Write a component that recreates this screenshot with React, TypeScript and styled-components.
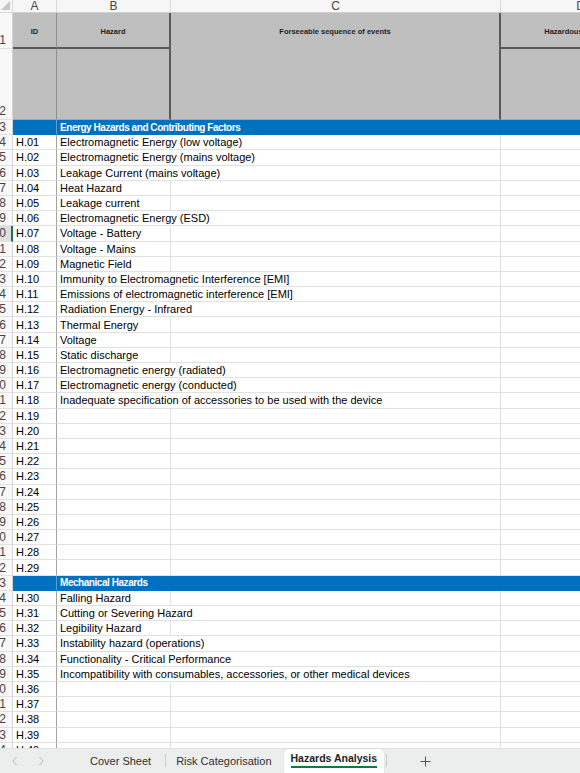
import React from "react";
import styled, { createGlobalStyle } from "styled-components";

const GlobalStyle = createGlobalStyle`
  html, body {
    margin: 0;
    padding: 0;
    background: #ffffff;
  }
  body {
    font-family: "Liberation Sans", Arial, sans-serif;
  }
  * {
    box-sizing: border-box;
  }
`;

const COLS = "27px 44px 114px 330px 160px";
const ROW_H = 15.2;
const ACTIVE_ROW = 10;

const energyHazards = [
  "Electromagnetic Energy (low voltage)",
  "Electromagnetic Energy (mains voltage)",
  "Leakage Current (mains voltage)",
  "Heat Hazard",
  "Leakage current",
  "Electromagnetic Energy (ESD)",
  "Voltage - Battery",
  "Voltage - Mains",
  "Magnetic Field",
  "Immunity to Electromagnetic Interference [EMI]",
  "Emissions of electromagnetic interference [EMI]",
  "Radiation Energy - Infrared",
  "Thermal Energy",
  "Voltage",
  "Static discharge",
  "Electromagnetic energy (radiated)",
  "Electromagnetic energy (conducted)",
  "Inadequate specification of accessories to be used with the device",
];

const mechanicalHazards = [
  "Falling Hazard",
  "Cutting or Severing Hazard",
  "Legibility Hazard",
  "Instability hazard (operations)",
  "Functionality - Critical Performance",
  "Incompatibility with consumables, accessories, or other medical devices",
];

type Line =
  | { kind: "section"; num: number; title: string }
  | { kind: "item"; num: number; id: string; text: string };

const buildLines = (): Line[] => {
  const lines: Line[] = [];
  let num = 3;
  let id = 1;
  const section = (title: string, items: string[], count: number) => {
    lines.push({ kind: "section", num: num++, title });
    for (let i = 0; i < count; i++) {
      lines.push({
        kind: "item",
        num: num++,
        id: `H.${String(id++).padStart(2, "0")}`,
        text: items[i] ?? "",
      });
    }
  };
  section("Energy Hazards and Contributing Factors", energyHazards, 29);
  section("Mechanical Hazards", mechanicalHazards, 12);
  return lines;
};

const lines = buildLines();

const Window = styled.div`
  width: 580px;
  height: 773px;
  overflow: hidden;
  display: flex;
  flex-direction: column;
  background: #ffffff;
`;

const SheetArea = styled.div`
  flex: 1;
  overflow: hidden;
`;

const Sheet = styled.div`
  margin-left: -14px;
  width: 675px;
`;

const ColumnBar = styled.div`
  display: grid;
  grid-template-columns: ${COLS};
  height: 13px;
  background: #f6f6f6;
`;

const Corner = styled.div`
  display: flex;
  justify-content: flex-end;
  align-items: flex-end;
  padding: 0 2px 2px 0;
  border-right: 1px solid #dadada;
  border-bottom: 1px solid #dadada;
`;

const ColumnLetter = styled.div`
  display: flex;
  align-items: center;
  justify-content: center;
  font-size: 12px;
  line-height: 1;
  color: #474747;
  border-right: 1px solid #dadada;
  border-bottom: 1px solid #d0d0d0;
`;

const HeaderGrid = styled.div`
  display: grid;
  grid-template-columns: ${COLS};
  grid-template-rows: 36px 71px;
`;

const RowNum = styled.div<{ $active?: boolean; $tall?: boolean }>`
  display: flex;
  align-items: ${(p) => (p.$tall ? "flex-end" : "center")};
  justify-content: flex-end;
  padding-right: ${(p) => (p.$active ? 5 : 6)}px;
  padding-bottom: ${(p) => (p.$tall ? 2 : 0)}px;
  font-size: 12px;
  line-height: 1;
  color: #444444;
  background: ${(p) => (p.$active ? "#dedede" : "#f8f8f8")};
  border-right: ${(p) => (p.$active ? "2px solid #1f7244" : "1px solid #d4d4d4")};
  border-bottom: 1px solid #e1e1e1;
`;

const HeadCell = styled.div<{ $thickRight?: boolean; $thickBottom?: boolean; $rows?: number }>`
  grid-row: span ${(p) => p.$rows ?? 1};
  background: #bfbfbf;
  padding-top: 14px;
  text-align: center;
  white-space: nowrap;
  overflow: hidden;
  font-size: 7.5px;
  font-weight: bold;
  color: #1e1e1e;
  border-right: ${(p) => (p.$thickRight ? "2px solid #5a5a5a" : "1px solid #8f8f8f")};
  border-bottom: ${(p) => (p.$thickBottom ? "2px solid #5a5a5a" : "1px solid #a6a6a6")};
`;

const DataRow = styled.div`
  display: grid;
  grid-template-columns: ${COLS};
  height: ${ROW_H}px;
`;

const Cell = styled.div<{ $span?: number; $strongRight?: boolean; $section?: boolean }>`
  grid-column: span ${(p) => p.$span ?? 1};
  display: flex;
  align-items: center;
  padding: 1px 0 0 3px;
  white-space: nowrap;
  overflow: hidden;
  font-size: ${(p) => (p.$section ? 10 : 11)}px;
  line-height: 1;
  color: ${(p) => (p.$section ? "#ffffff" : "#000000")};
  font-weight: ${(p) => (p.$section ? "bold" : "normal")};
  letter-spacing: ${(p) => (p.$section ? "-0.45px" : "0")};
  background: ${(p) => (p.$section ? "#0070c0" : "#ffffff")};
  border-right: 1px solid
    ${(p) => (p.$section ? "#5d9fd3" : p.$strongRight ? "#a3a3a3" : "#e1e1e1")};
  border-bottom: 1px solid ${(p) => (p.$section ? "#0070c0" : "#e1e1e1")};
`;

const TabBar = styled.div`
  height: 25px;
  flex-shrink: 0;
  display: flex;
  align-items: stretch;
  background: #eceeee;
  border-top: 1px solid #e2e2e2;
  font-size: 11px;
  color: #303030;
`;

const NavGroup = styled.div`
  width: 76px;
  display: flex;
  padding-left: 2px;
`;

const NavButton = styled.div`
  width: 26px;
  display: flex;
  align-items: center;
  justify-content: center;
`;

const SheetTab = styled.div<{ $active?: boolean; $pad: number }>`
  display: flex;
  align-items: center;
  padding: 0 ${(p) => p.$pad}px;
  margin: 0 ${(p) => (p.$active ? 2 : 0)}px;
  background: ${(p) => (p.$active ? "#ffffff" : "transparent")};
  border-radius: ${(p) => (p.$active ? "5px 5px 0 0" : "0")};
  box-shadow: ${(p) => (p.$active ? "0 0 2px rgba(0, 0, 0, 0.12)" : "none")};
  white-space: nowrap;
`;

const ActiveLabel = styled.span`
  font-size: 10.5px;
  font-weight: bold;
  color: #222222;
  line-height: 12px;
  padding-bottom: 2px;
  margin-top: -2px;
  border-bottom: 2px solid #137a3e;
`;

const Separator = styled.div`
  width: 1px;
  background: #c9cbcb;
  margin: 5px 0 6px;
`;

const AddButton = styled.div`
  width: 76px;
  display: flex;
  align-items: center;
  justify-content: center;
`;

const Chevron = ({ dir }: { dir: "left" | "right" }) => (
  <svg width="8" height="10" viewBox="0 0 8 10">
    <path
      d={dir === "left" ? "M5.5 1 L1.8 5 L5.5 9" : "M2.5 1 L6.2 5 L2.5 9"}
      fill="none"
      stroke="#b4b6b6"
      strokeWidth="1"
    />
  </svg>
);

const Plus = () => (
  <svg width="11" height="11" viewBox="0 0 11 11">
    <path d="M5.5 0.5 V10.5 M0.5 5.5 H10.5" stroke="#555555" strokeWidth="1" />
  </svg>
);

const SelectAll = () => (
  <svg width="9" height="9" viewBox="0 0 9 9">
    <polygon points="9,0 9,9 0,9" fill="#c6c6c6" />
  </svg>
);

const ItemRow = ({ line }: { line: Extract<Line, { kind: "item" }> }) => {
  const wide = line.text.length > 20;
  return (
    <DataRow>
      <RowNum $active={line.num === ACTIVE_ROW}>{line.num}</RowNum>
      <Cell $strongRight>{line.id}</Cell>
      {wide ? (
        <Cell $span={2}>{line.text}</Cell>
      ) : (
        <>
          <Cell>{line.text}</Cell>
          <Cell />
        </>
      )}
      <Cell />
    </DataRow>
  );
};

const SectionRow = ({ line }: { line: Extract<Line, { kind: "section" }> }) => (
  <DataRow>
    <RowNum>{line.num}</RowNum>
    <Cell $section />
    <Cell $section $span={3}>
      {line.title}
    </Cell>
  </DataRow>
);

export default function App() {
  return (
    <Window>
      <GlobalStyle />
      <SheetArea>
        <Sheet>
          <ColumnBar>
            <Corner>
              <SelectAll />
            </Corner>
            <ColumnLetter>A</ColumnLetter>
            <ColumnLetter>B</ColumnLetter>
            <ColumnLetter>C</ColumnLetter>
            <ColumnLetter>D</ColumnLetter>
          </ColumnBar>

          <HeaderGrid>
            <RowNum $tall>1</RowNum>
            <HeadCell $thickBottom>ID</HeadCell>
            <HeadCell $thickBottom $thickRight>
              Hazard
            </HeadCell>
            <HeadCell $rows={2} $thickRight>
              Forseeable sequence of events
            </HeadCell>
            <HeadCell $thickBottom>Hazardous Situation</HeadCell>
            <RowNum $tall>2</RowNum>
            <HeadCell />
            <HeadCell $thickRight />
            <HeadCell />
          </HeaderGrid>

          {lines.map((line) =>
            line.kind === "section" ? (
              <SectionRow key={line.num} line={line} />
            ) : (
              <ItemRow key={line.num} line={line} />
            )
          )}
        </Sheet>
      </SheetArea>

      <TabBar>
        <NavGroup>
          <NavButton>
            <Chevron dir="left" />
          </NavButton>
          <NavButton>
            <Chevron dir="right" />
          </NavButton>
        </NavGroup>
        <SheetTab $pad={14}>Cover Sheet</SheetTab>
        <Separator />
        <SheetTab $pad={10}>Risk Categorisation</SheetTab>
        <SheetTab $active $pad={7}>
          <ActiveLabel>Hazards Analysis</ActiveLabel>
        </SheetTab>
        <Separator />
        <AddButton>
          <Plus />
        </AddButton>
      </TabBar>
    </Window>
  );
}
